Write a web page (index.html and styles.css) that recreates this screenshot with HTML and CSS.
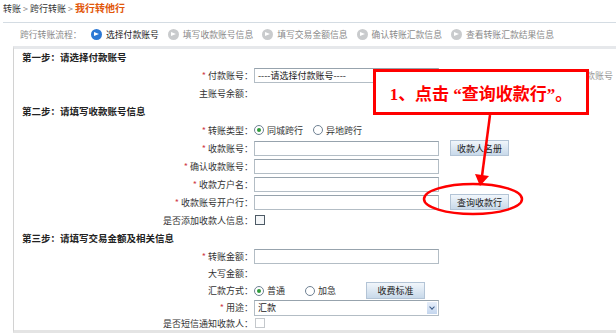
FILE: index.html
```html
<!DOCTYPE html>
<html lang="zh-CN">
<head>
  <meta charset="UTF-8">
  <title>我行转他行</title>
  <link rel="stylesheet" href="styles.css">
</head>
<body>
  <div class="page">
    <div class="crumb">转账 <span class="sep">&gt;</span> 跨行转账 <span class="sep">&gt;</span> <b>我行转他行</b></div>

    <div class="steps">
      <span class="steps-title">跨行转账流程：</span>
      <span class="step on"><i class="dot"></i>选择付款账号</span>
      <span class="step"><i class="dot"></i>填写收款账号信息</span>
      <span class="step"><i class="dot"></i>填写交易金额信息</span>
      <span class="step"><i class="dot"></i>确认转账汇款信息</span>
      <span class="step"><i class="dot"></i>查看转账汇款结果信息</span>
    </div>

    <div class="panel">
      <div class="head">第一步：请选择付款账号</div>
      <div class="row">
        <label><em>*</em> 付款账号：</label>
        <div class="field"><span class="select">----请选择付款账号----</span><span class="hint">请选择付款账号</span></div>
      </div>
      <div class="row">
        <label>主账号余额：</label>
        <div class="field"></div>
      </div>

      <div class="head h2">第二步：请填写收款账号信息</div>
      <div class="row">
        <label><em>*</em> 转账类型：</label>
        <div class="field"><i class="radio on"></i><span class="opt">同城跨行</span><i class="radio"></i><span class="opt">异地跨行</span></div>
      </div>
      <div class="row">
        <label><em>*</em> 收款账号：</label>
        <div class="field"><span class="input"></span><span class="btn">收款人名册</span></div>
      </div>
      <div class="row">
        <label><em>*</em> 确认收款账号：</label>
        <div class="field"><span class="input"></span></div>
      </div>
      <div class="row">
        <label><em>*</em> 收款方户名：</label>
        <div class="field"><span class="input"></span></div>
      </div>
      <div class="row">
        <label><em>*</em> 收款账号开户行：</label>
        <div class="field"><span class="input"></span><span class="btn">查询收款行</span></div>
      </div>
      <div class="row">
        <label>是否添加收款人信息：</label>
        <div class="field"><i class="check"></i></div>
      </div>

      <div class="head h2">第三步：请填写交易金额及相关信息</div>
      <div class="row small">
        <label><em>*</em> 转账金额：</label>
        <div class="field"><span class="input"></span></div>
      </div>
      <div class="row small">
        <label>大写金额：</label>
        <div class="field"></div>
      </div>
      <div class="row small">
        <label>汇款方式：</label>
        <div class="field"><i class="radio on"></i><span class="opt short">普通</span><i class="radio"></i><span class="opt">加急</span><span class="btn fee">收费标准</span></div>
      </div>
      <div class="row small">
        <label><em>*</em> 用途：</label>
        <div class="field"><span class="select drop">汇款<i class="arrow"></i></span></div>
      </div>
      <div class="row last">
        <label>是否短信通知收款人：</label>
        <div class="field"><i class="check off"></i></div>
      </div>
    </div>

    <!-- annotation laid over the form -->
    <div class="note">1、点击 “查询收款行”。</div>
    <svg class="marks" width="616" height="334" viewBox="0 0 616 334">
      <line x1="490" y1="115" x2="482" y2="176" stroke="#f00" stroke-width="2.5"/>
      <polygon points="475,174 489,176 480,186" fill="#f00"/>
      <ellipse cx="473" cy="199" rx="49" ry="15" fill="none" stroke="#f00" stroke-width="2.5"/>
    </svg>
  </div>
</body>
</html>
```

FILE: styles.css
```css
body {
  margin: 0;
  font-family: "Noto Sans CJK SC", "DejaVu Sans", sans-serif;
  font-size: 9px;
  color: #333;
  background: #fff;
}

.page {
  position: relative;
  width: 616px;
  height: 334px;
  overflow: hidden;
}

.crumb {
  margin-left: 3px;
  height: 22px;
  line-height: 16px;
  border-bottom: 1px solid #d4dce3;
  color: #333;
}
.crumb .sep {
  color: #888;
}
.crumb b {
  color: #e2580b;
  font-size: 10px;
}

.steps {
  display: flex;
  align-items: center;
  height: 23px;
  padding-left: 20px;
  color: #8a8a8a;
  font-size: 8.8px;
}
.steps-title {
  width: 71px;
}
.step {
  display: flex;
  align-items: center;
  margin-right: 9px;
}
.step.on {
  color: #222;
}
.dot {
  position: relative;
  width: 11px;
  height: 11px;
  border-radius: 50%;
  background: #c9cbcd;
  margin-right: 4px;
}
.dot::after {
  content: "";
  position: absolute;
  left: 3px;
  top: 3px;
  width: 0;
  height: 0;
  border-left: 5px solid #fff;
  border-top: 2.5px solid transparent;
  border-bottom: 2.5px solid transparent;
}
.step.on .dot {
  background: #2b78d4;
}

.panel {
  margin-left: 13px;
  border-left: 1px solid #d2d2d2;
  border-top: 3px solid #e6e8eb;
  border-bottom: 3px solid #e4e4e4;
}

.head {
  height: 17px;
  line-height: 17px;
  padding-left: 8px;
  font-weight: bold;
  font-size: 9.5px;
  color: #222;
}
.head.h2 {
  height: 19px;
  line-height: 19px;
}

.row {
  display: grid;
  grid-template-columns: 239px 1fr;
  align-items: center;
  height: 18px;
}
.row.small {
  height: 17px;
}
.row.last {
  height: 14px;
}
.row label {
  text-align: right;
  color: #333;
}
.row em {
  color: #d0404a;
  font-style: normal;
}
.field {
  display: flex;
  align-items: center;
  padding-left: 1px;
}

.input,
.select {
  box-sizing: border-box;
  display: flex;
  align-items: center;
  width: 185px;
  height: 15px;
  border: 1px solid #b3bdc5;
  border-top-color: #97a3ad;
  background: #fff;
}
.select {
  padding-left: 3px;
  color: #222;
}
.select.drop {
  position: relative;
  height: 16px;
}
.arrow {
  position: absolute;
  right: 1px;
  top: 1px;
  width: 10px;
  height: 12px;
  background: linear-gradient(#e6eefa, #c4d6ee);
}
.arrow::after {
  content: "";
  position: absolute;
  left: 3px;
  top: 3px;
  width: 3px;
  height: 3px;
  border-right: 1.5px solid #3b5a86;
  border-bottom: 1.5px solid #3b5a86;
  transform: rotate(45deg);
}
.hint {
  margin-left: 111px;
  color: #999;
  white-space: nowrap;
}

.btn {
  box-sizing: border-box;
  display: flex;
  align-items: center;
  justify-content: center;
  width: 59px;
  height: 16px;
  margin-left: 11px;
  border: 1px solid #b3c4d6;
  background: linear-gradient(#f1f6fb, #c8d9ea);
  color: #222;
}
.btn.fee {
  margin-left: 2px;
  height: 17px;
}

.radio {
  box-sizing: border-box;
  position: relative;
  width: 10px;
  height: 10px;
  border: 1px solid #6f8193;
  border-radius: 50%;
  background: #fff;
  margin-right: 3px;
}
.radio.on::after {
  content: "";
  position: absolute;
  left: 2px;
  top: 2px;
  width: 4px;
  height: 4px;
  border-radius: 50%;
  background: #2f9b3a;
}
.opt {
  width: 46px;
}
.opt.short {
  width: 38px;
}

.check {
  box-sizing: border-box;
  width: 10px;
  height: 10px;
  margin-left: 1px;
  border: 1px solid #4d5a66;
  background: #f4f6f8;
}
.check.off {
  border-color: #c4c8cc;
  background: #fff;
}

.note {
  position: absolute;
  left: 373px;
  top: 69px;
  box-sizing: border-box;
  width: 216px;
  height: 46px;
  border: 3px solid #f00;
  background: #fff;
  display: flex;
  align-items: center;
  justify-content: center;
  color: #f00;
  font-family: "Liberation Serif", "Noto Sans CJK SC", serif;
  font-weight: bold;
  font-size: 17px;
}

.marks {
  position: absolute;
  left: 0;
  top: 0;
  pointer-events: none;
}
```
